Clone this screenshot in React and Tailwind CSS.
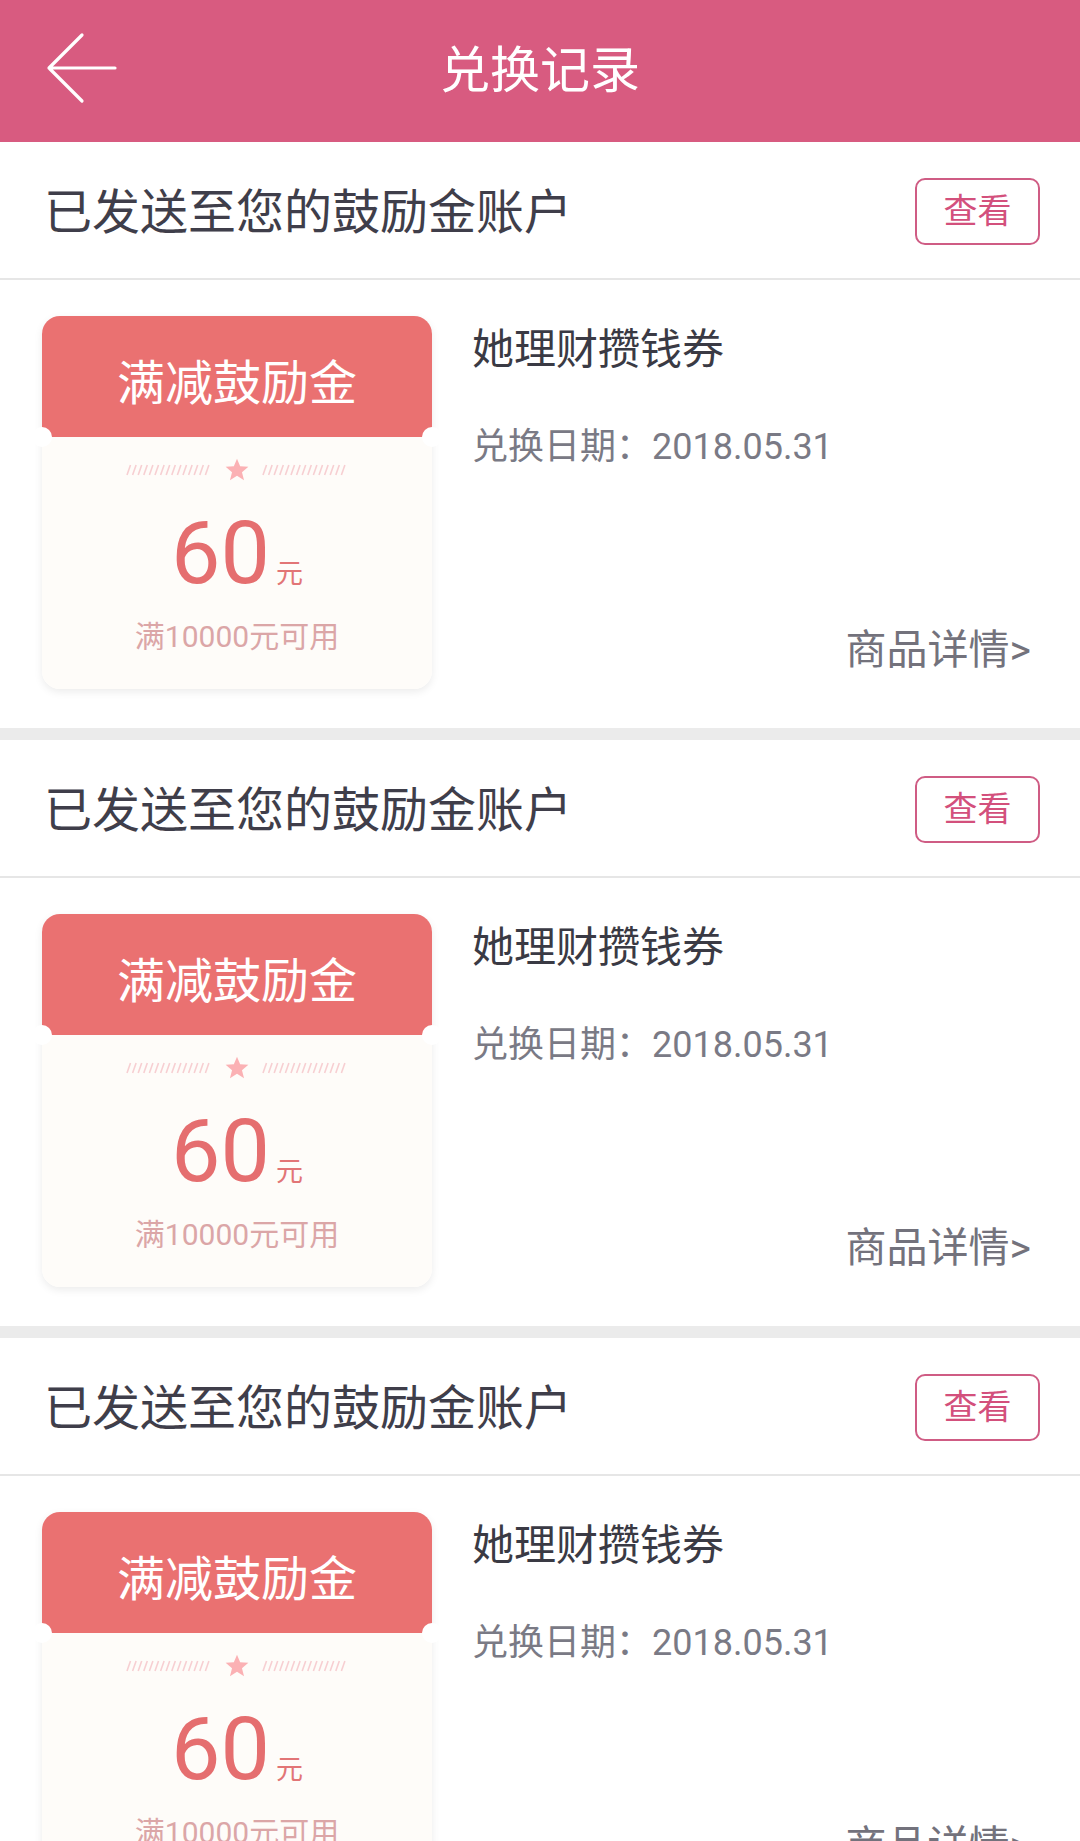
import React from 'react';

const FONT = "font-['Roboto','Noto_Sans_CJK_SC',sans-serif]";

function BackArrow() {
  return (
    <svg width="80" height="80" viewBox="0 0 80 80" className="absolute left-[40px] top-[30px]">
      <path d="M42 5 L9 38 L42 71 M9 38 L75 38" stroke="#fff" strokeWidth="3.2" fill="none" strokeLinecap="round" strokeLinejoin="round" />
    </svg>
  );
}

function Stripes() {
  return (
    <svg width="86" height="14" viewBox="0 0 86 14">
      {Array.from({ length: 15 }).map((_, i) => (
        <line key={i} x1={i * 5.6 + 1} y1="12" x2={i * 5.6 + 4.5} y2="2" stroke="#f7cfd2" strokeWidth="1.6" />
      ))}
    </svg>
  );
}

function Star() {
  return (
    <svg width="26" height="26" viewBox="0 0 24 24">
      <path d="M12 1.5 L14.9 8.6 L22.5 9.1 L16.6 14 L18.5 21.5 L12 17.4 L5.5 21.5 L7.4 14 L1.5 9.1 L9.1 8.6 Z" fill="#fbb1b4" />
    </svg>
  );
}

function Coupon() {
  return (
    <div className="relative w-[390px] h-[373px] rounded-[18px] shadow-[0_3px_8px_rgba(0,0,0,0.08)]">
      <div className="h-[121px] rounded-t-[18px] bg-[#ea7171] flex items-center justify-center pt-[14px]">
        <span className="text-[48px] leading-none text-white">满减鼓励金</span>
      </div>
      <div className="h-[252px] rounded-b-[18px] bg-[#fefcf9] flex flex-col items-center pt-[20px]">
        <div className="flex items-center gap-[12px] h-[26px]">
          <Stripes />
          <Star />
          <Stripes />
        </div>
        <div className="flex items-baseline mt-[26px]">
          <span className="text-[88px] leading-none text-[#e56e6f]">60</span>
          <span className="text-[27px] leading-none text-[#e27576] ml-[6px]">元</span>
        </div>
        <div className="mt-[25px] text-[30px] leading-none text-[#dba6a7]">满10000元可用</div>
      </div>
      <div className="absolute left-[-10px] top-[111px] w-[20px] h-[20px] rounded-full bg-white" />
      <div className="absolute right-[-10px] top-[111px] w-[20px] h-[20px] rounded-full bg-white" />
    </div>
  );
}

function Record() {
  return (
    <div>
      <div className="h-[138px] pl-[44px] pr-[45px] pt-[6px] flex items-center justify-between border-b-2 border-[#e6e6e6]">
        <span className="text-[48px] leading-none text-[#3f3e4a]">已发送至您的鼓励金账户</span>
        <button className="w-[125px] h-[67px] border-2 border-[#cf5c84] rounded-[10px] flex items-center justify-center text-[34px] leading-none text-[#d3507c] mr-[-5px] mt-[-4px]">
          查看
        </button>
      </div>
      <div className="h-[448px] flex pl-[42px] pt-[36px]">
        <Coupon />
        <div className="flex-1 flex flex-col pl-[40px] pr-[49px] pb-[57px]">
          <div className="mt-[13px] text-[42px] leading-none text-[#3a3a44]">她理财攒钱券</div>
          <div className="mt-[58px] text-[36px] leading-none text-[#7a7a85]">兑换日期：2018.05.31</div>
          <div className="mt-auto self-end text-[41px] leading-none text-[#73727c]">商品详情&gt;</div>
        </div>
      </div>
      <div className="h-[12px] bg-[#ebebeb]" />
    </div>
  );
}

export default function App() {
  return (
    <div className={`w-[1080px] h-[1841px] overflow-hidden bg-white ${FONT}`}>
      <div className="relative h-[142px] bg-[#d85b80] flex items-center justify-center">
        <BackArrow />
        <span className="text-[50px] leading-none text-white">兑换记录</span>
      </div>
      <Record />
      <Record />
      <Record />
    </div>
  );
}
